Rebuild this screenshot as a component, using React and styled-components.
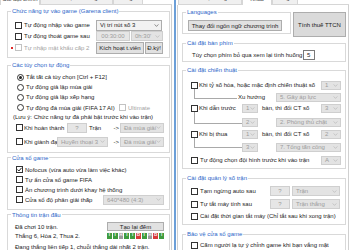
import React from 'react';
import styled, { createGlobalStyle } from 'styled-components';

const Global = createGlobalStyle`
  html, body { margin: 0; padding: 0; background: #fff; }
  body {
    width: 350px; height: 250px; overflow: hidden;
    font-family: "Liberation Sans", Arial, sans-serif;
    font-size: 6px; color: #1b1b1b;
  }
  * { box-sizing: border-box; }
`;

const Screen = styled.div`
  display: flex;
  width: 350px;
  height: 250px;
  overflow: hidden;
  background: #fff;
`;

const Panel = styled.div`
  display: flex;
  flex-direction: column;
  flex: none;
  width: ${p => p.$w}px;
  margin-left: ${p => p.$ml || 0}px;
`;

const Divider = styled.div`
  flex: none;
  width: 2px;
  margin-left: 2px;
  background: #6c9fd8;
`;

const TabStrip = styled.div`
  display: flex;
  align-items: flex-end;
  height: 5px;
  flex: none;
  overflow: hidden;
  padding-left: ${p => p.$pl || 0}px;
`;

const Tab = styled.div`
  width: ${p => p.$w}px;
  height: 5px;
  flex: none;
  display: flex;
  align-items: flex-end;
  justify-content: center;
  overflow: hidden;
  background: ${p => (p.$active ? '#fff' : '#f0f0f0')};
  border: 1px solid #d6d6d6;
  border-top: none;
  ${p => (p.$active ? 'border-bottom: none;' : '')}
  & > span { line-height: 12px; white-space: nowrap; color: #444; }
`;

const TabRest = styled.div`
  flex: 1;
  align-self: stretch;
  border-bottom: 1px solid #d6d6d6;
`;

const Page = styled.div`
  flex: 1;
  display: flex;
  flex-direction: column;
  min-height: 0;
  padding: ${p => p.$pad};
  border-left: ${p => (p.$bl ? '1px solid #d0d0d0' : 'none')};
  border-right: 1px solid #d0d0d0;
`;

const Group = styled.fieldset`
  margin: ${p => p.$mt || 0}px 0 0;
  padding: 0;
  border: 1px solid #d9d9d9;
  min-width: 0;
  flex: none;
  ${p => (p.$w ? `width: ${p.$w}px;` : '')}
`;

const Legend = styled.legend`
  padding: 0 1px;
  margin-left: 3px;
  line-height: 8px;
  color: #2c67c9;
  white-space: nowrap;
`;

const Body = styled.div`
  display: flex;
  flex-direction: column;
  padding: ${p => p.$pt || 0}px ${p => p.$pr || 0}px ${p => p.$pb || 0}px ${p => p.$pl || 0}px;
`;

const Row = styled.div`
  display: flex;
  align-items: center;
  flex: none;
  height: ${p => p.$h || 10}px;
  margin-top: ${p => p.$mt || 0}px;
  padding-left: ${p => p.$indent || 0}px;
`;

const TopRow = styled.div`
  display: flex;
  align-items: flex-start;
  gap: 1px;
  flex: none;
`;

const Lead = styled.span`
  display: flex;
  align-items: center;
  flex: none;
  width: ${p => p.$w}px;
  white-space: nowrap;
`;

const Label = styled.span`
  white-space: nowrap;
  line-height: 8px;
  flex: none;
  color: ${p => (p.$disabled ? '#a3a3a3' : 'inherit')};
  margin-left: ${p => (p.$ml === 'auto' ? 'auto' : `${p.$ml || 0}px`)};
`;

const Box = styled.span`
  width: 7px;
  height: 7px;
  flex: none;
  margin-right: ${p => p.$gap ?? 2}px;
  border: 1px solid ${p => (p.$disabled ? '#c2c2c2' : '#333')};
  background: #fff;
  display: flex;
  align-items: center;
  justify-content: center;
  & svg { width: 5px; height: 5px; fill: none; stroke: ${p => (p.$disabled ? '#b5b5b5' : '#222')}; stroke-width: 1; }
`;

const Check = ({ checked, disabled, gap }) => (
  <Box $disabled={disabled} $gap={gap}>
    {checked && (
      <svg viewBox="0 0 5 5"><path d="M0.4 2.5 L1.9 4 L4.6 0.8" /></svg>
    )}
  </Box>
);

const Radio = styled.span`
  width: 7px;
  height: 7px;
  flex: none;
  margin-right: 2px;
  border-radius: 50%;
  border: 1px solid #333;
  background: #fff;
  display: flex;
  align-items: center;
  justify-content: center;
  &::after {
    content: '';
    width: 3px;
    height: 3px;
    border-radius: 50%;
    background: ${p => (p.$checked ? '#222' : 'transparent')};
  }
`;

const RedDot = styled.span`
  width: 2px;
  height: 2px;
  flex: none;
  margin-left: -4px;
  margin-right: 2px;
  background: #e02828;
`;

const ComboBox = styled.div`
  width: ${p => p.$w}px;
  height: ${p => p.$h || 10}px;
  flex: none;
  display: flex;
  align-items: center;
  justify-content: space-between;
  padding: 0 2px 0 3px;
  border: 1px solid ${p => (p.$disabled ? '#cfcfcf' : '#adadad')};
  background: ${p => (p.$disabled ? '#e3e3e3' : '#f2f2f2')};
  color: ${p => (p.$disabled ? '#9c9c9c' : '#1b1b1b')};
  margin-left: ${p => (p.$ml === 'auto' ? 'auto' : `${p.$ml || 0}px`)};
  white-space: nowrap;
  overflow: hidden;
  line-height: 8px;
`;

const Caret = styled.svg`
  width: 5px;
  height: 3px;
  flex: none;
  fill: none;
  stroke: ${p => (p.$disabled ? '#b3b3b3' : '#444')};
  stroke-width: 0.8;
`;

const Combo = ({ children, disabled, w, h, ml }) => (
  <ComboBox $w={w} $h={h} $ml={ml} $disabled={disabled}>
    <span>{children}</span>
    <Caret viewBox="0 0 6 4" $disabled={disabled}><path d="M0.5 0.6 L3 3.2 L5.5 0.6" /></Caret>
  </ComboBox>
);

const Field = styled.div`
  width: ${p => p.$w}px;
  height: ${p => p.$h || 10}px;
  flex: none;
  display: flex;
  align-items: center;
  justify-content: ${p => (p.$left ? 'flex-start' : 'center')};
  padding-left: ${p => (p.$left ? 3 : 0)}px;
  border: 1px solid ${p => (p.$disabled ? '#cfcfcf' : '#7a7a7a')};
  background: ${p => (p.$disabled ? '#e6e6e6' : '#fff')};
  color: ${p => (p.$disabled ? '#9c9c9c' : '#1b1b1b')};
  margin-left: ${p => p.$ml || 0}px;
  line-height: 8px;
`;

const Button = styled.button`
  font: inherit;
  color: #1b1b1b;
  flex: none;
  width: ${p => p.$w}px;
  height: ${p => p.$h}px;
  margin: ${p => p.$mt || 0}px 0 0 ${p => (p.$ml === 'auto' ? 'auto' : `${p.$ml || 0}px`)};
  padding: 0;
  border: 1px solid #adadad;
  background: ${p => (p.$dark ? '#dadada' : '#e1e1e1')};
  white-space: nowrap;
  line-height: 8px;
`;

const Arrow = styled.span`
  margin-left: auto;
  white-space: nowrap;
  line-height: 8px;
`;

const Branch = styled.span`
  flex: none;
  align-self: flex-start;
  width: ${p => p.$w}px;
  height: ${p => p.$h}px;
  margin-top: -${p => p.$up}px;
  margin-left: 3px;
  border-left: 1px solid #a9a9a9;
  border-bottom: 1px solid #a9a9a9;
`;

const Results = styled.div`
  display: flex;
  gap: 1px;
  width: 57px;
  height: 6px;
  margin-left: auto;
  flex: none;
`;

const Result = styled.span`
  flex: 1;
  display: flex;
  align-items: center;
  justify-content: center;
  font-size: 4.6px;
  font-weight: bold;
  line-height: 1;
  color: #f4f4f4;
  background: ${p => (p.$r === 'T' ? '#3f9c3f' : p.$r === 'B' ? '#d83a3a' : '#9a9a9a')};
`;

const results = ['T', 'T', 'H', 'T', 'T', 'B', 'T', 'H', 'B', 'T'];

function LeftPanel() {
  return (
    <Panel $w={172}>
      <TabStrip>
        <Tab $w={40} $active><span>Cài đặt chính</span></Tab>
        <Tab $w={73}><span>Cài đặt bổ sung</span></Tab>
        <Tab $w={30}><span>Thống kê</span></Tab>
        <TabRest />
      </TabStrip>
      <Page $pad="2px 1px 0 7px">
        <Group>
          <Legend>Chức năng tự vào game (Garena client)</Legend>
          <Body $pt={4} $pl={7} $pb={3}>
            <Row $h={12}>
              <Lead $w={81}><Check /><Label>Tự động nhập vào game</Label></Lead>
              <Combo w={66} h={11}>Vị trí nút số 3</Combo>
            </Row>
            <Row $h={10}>
              <Lead $w={81}><Check /><Label>Tự động thoát game sau</Label></Lead>
              <Field $w={34} $disabled>00:30:00</Field>
              <Combo w={32} ml={1} disabled>0h:30'</Combo>
            </Row>
            <Row $h={13}>
              <Lead $w={81}><RedDot /><Check disabled /><Label $disabled>Tự nhập mật khẩu cấp 2</Label></Lead>
              <Button $w={48} $h={12}>Kích hoạt t.viên</Button>
              <Button $w={18} $h={12} $ml={1}>Đ.ký!</Button>
            </Row>
          </Body>
        </Group>

        <Group $mt={3}>
          <Legend>Các tùy chọn tự động</Legend>
          <Body $pt={3} $pl={5} $pr={5} $pb={5}>
            <Row $h={10.2} $indent={4}><Radio $checked /><Label>Tắt tất cả tùy chọn [Ctrl + F12]</Label></Row>
            <Row $h={10.2} $indent={4}><Radio /><Label>Tự động giả lập mùa giải</Label></Row>
            <Row $h={10.2} $indent={4}><Radio /><Label>Tự động giả lập xếp hạng</Label></Row>
            <Row $h={10.2} $indent={4}>
              <Lead $w={102}><Radio /><Label>Tự động đá mùa giải (FIFA 17 AI)</Label></Lead>
              <Check disabled /><Label $disabled>Ultimate</Label>
            </Row>
            <Row $h={8}><Label>(Lưu ý: Chức năng tự đá phải bật trước khi vào trận)</Label></Row>
            <Row $h={10} $mt={2} $indent={3}>
              <Lead $w={51}><Check gap={1} /><Label>Khi hoàn thành</Label></Lead>
              <Field $w={20} $disabled>?</Field>
              <Label $ml={2}>Trận</Label>
              <Arrow>-&gt;</Arrow>
              <Combo w={44} ml={1} disabled>Đá mùa giải</Combo>
            </Row>
            <Row $h={10} $mt={4} $indent={3}>
              <Lead $w={41}><Check gap={1} /><Label>Khi giành đạt</Label></Lead>
              <Combo w={51} disabled>Huyền thoại 3</Combo>
              <Arrow>-&gt;</Arrow>
              <Combo w={44} ml={1} disabled>Đá mùa giải</Combo>
            </Row>
          </Body>
        </Group>

        <Group $mt={1}>
          <Legend>Cửa sổ game</Legend>
          <Body $pt={3} $pl={8} $pr={5} $pb={4}>
            <Row><Check checked /><Label>Nofocus (vừa auto vừa làm việc khác)</Label></Row>
            <Row><Check /><Label>Tự ẩn cửa sổ game FIFA</Label></Row>
            <Row><Check /><Label>Ẩn chương trình dưới khay hệ thống</Label></Row>
            <Row>
              <Check /><Label>Cửa sổ độ phân giải thấp</Label>
              <Combo w={61} ml="auto" disabled>640*480 (4:3)</Combo>
            </Row>
          </Body>
        </Group>

        <Group $mt={1}>
          <Legend>Thông tin trận đấu</Legend>
          <Body $pt={3} $pl={7} $pr={5}>
            <Row>
              <Label>Đã chơi 10 trận.</Label>
              <Button $w={57} $h={9} $ml="auto">Tạo lại đếm</Button>
            </Row>
            <Row $h={8}>
              <Label>Thắng 6, Hòa 2, Thua 2.</Label>
              <Results>
                {results.map((r, i) => <Result key={i} $r={r}>{r}</Result>)}
              </Results>
            </Row>
            <Row $mt={2}><Label>Đang thắng liên tiếp 1, chuỗi thắng dài nhất 2 trận.</Label></Row>
          </Body>
        </Group>
      </Page>
    </Panel>
  );
}

function RightPanel() {
  return (
    <Panel $w={172} $ml={1}>
      <TabStrip $pl={1}>
        <Tab $w={64}><span>Chiến thuật nâng cao</span></Tab>
        <Tab $w={30} $active><span>Khác</span></Tab>
        <Tab $w={26}><span>Thống kê</span></Tab>
        <TabRest />
      </TabStrip>
      <Page $pad="3px 2px 0 4px" $bl>
        <TopRow>
          <Group $w={109}>
            <Legend>Languages</Legend>
            <Body $pt={4} $pl={5} $pb={2}>
              <Button $w={94} $h={11}>Thay đổi ngôn ngữ chương trình</Button>
            </Body>
          </Group>
          <Button $w={53} $h={25} $mt={4} $ml={1} $dark>Tính thuế TTCN</Button>
        </TopRow>

        <Group $mt={2}>
          <Legend>Cài đặt bàn phím</Legend>
          <Body $pt={3} $pl={9} $pb={1}>
            <Row>
              <Lead $w={111}><Label>Tùy chọn phím bỏ qua xem lại tình huống</Label></Lead>
              <Field $w={12} $left>5</Field>
            </Row>
          </Body>
        </Group>

        <Group $mt={4}>
          <Legend>Cài đặt chiến thuật</Legend>
          <Body $pt={6} $pl={8} $pr={4} $pb={3}>
            <Row>
              <Check gap={1} /><Label>Khi tỷ số hòa, hoặc mặc định chiến thuật số</Label>
              <Combo w={20} h={9} ml="auto" disabled>1</Combo>
            </Row>
            <Row $mt={2}>
              <Branch $w={43} $h={10} $up={3} />
              <Label $ml={1}>Xu hướng</Label>
              <Combo w={65} h={9} ml="auto" disabled>5. Gây áp lực</Combo>
            </Row>
            <Row $mt={1}>
              <Lead $w={51}><Check gap={1} /><Label>Khi dẫn trước</Label></Lead>
              <Combo w={16} h={9} disabled>1</Combo>
              <Label $ml={4}>bàn, thì đổi CT số</Label>
              <Combo w={20} h={9} ml="auto" disabled>3</Combo>
            </Row>
            <Row $mt={4}>
              <Branch $w={48} $h={12} $up={5} />
              <Combo w={16} h={9} disabled>2</Combo>
              <Combo w={65} h={9} ml="auto" disabled>2. Phòng thủ chặt</Combo>
            </Row>
            <Row $mt={2}>
              <Lead $w={51}><Check gap={1} /><Label>Khi bị thua</Label></Lead>
              <Combo w={16} h={9} disabled>1</Combo>
              <Label $ml={4}>bàn, thì đổi CT số</Label>
              <Combo w={20} h={9} ml="auto" disabled>2</Combo>
            </Row>
            <Row $mt={3}>
              <Branch $w={48} $h={10} $up={4} />
              <Combo w={16} h={9} disabled>3</Combo>
              <Combo w={65} h={9} ml="auto" disabled>7. Tổng tấn công</Combo>
            </Row>
            <Row $mt={3}>
              <Check /><Label>Tự động chọn đội hình trước khi vào trận</Label>
              <Combo w={20} h={9} ml="auto" disabled>A</Combo>
            </Row>
          </Body>
        </Group>

        <Group $mt={5}>
          <Legend>Cài đặt quản lý số trận</Legend>
          <Body $pt={4} $pl={8} $pr={4} $pb={3}>
            <Row>
              <Lead $w={79}><Check /><Label>Tạm ngừng auto sau</Label></Lead>
              <Field $w={20} $disabled>?</Field>
              <Combo w={48} ml={2} disabled>Trận</Combo>
            </Row>
            <Row $mt={3}>
              <Lead $w={79}><Check /><Label>Tự tắt máy tính sau</Label></Lead>
              <Field $w={20} $disabled>?</Field>
              <Combo w={48} ml={2} disabled>Trận thắng</Combo>
            </Row>
            <Row $mt={2}>
              <Check /><Label>Cài đặt thời gian tắt máy (Chỉ tắt sau khi xong trận)</Label>
            </Row>
          </Body>
        </Group>

        <Group $mt={5}>
          <Legend>Bảo vệ cửa sổ game</Legend>
          <Body $pt={2} $pl={8} $pr={4}>
            <Row>
              <Check /><Label>Cấm người lạ tự ý chỉnh game khi bạn vắng mặt</Label>
            </Row>
          </Body>
        </Group>
      </Page>
    </Panel>
  );
}

export default function App() {
  return (
    <>
      <Global />
      <Screen>
        <LeftPanel />
        <Divider />
        <RightPanel />
      </Screen>
    </>
  );
}
